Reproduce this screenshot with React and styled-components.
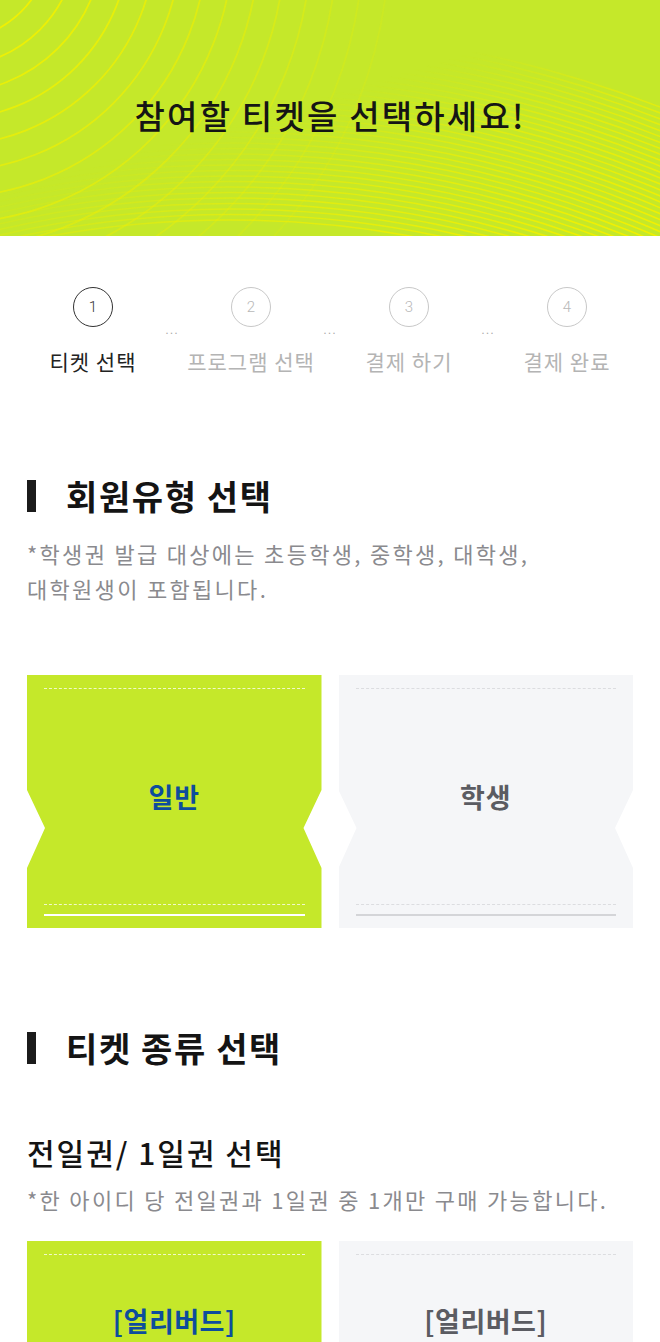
import React from "react";
import styled, { createGlobalStyle } from "styled-components";

const Global = createGlobalStyle`
  html, body { margin: 0; padding: 0; background: #fff; }
  body { font-family: "Noto Sans CJK KR", "Noto Sans", sans-serif; color: #111; }
  * { box-sizing: border-box; }
`;

const Page = styled.div`
  width: 660px;
  height: 1342px;
  overflow: hidden;
  background: #fff;
`;

const Hero = styled.header`
  position: relative;
  height: 236px;
  background: #c5e82a;
  display: flex;
  align-items: center;
  justify-content: center;
  overflow: hidden;
`;

const HeroArt = styled.svg`
  position: absolute;
  inset: 0;
  width: 100%;
  height: 100%;
`;

const HeroTitle = styled.h1`
  position: relative;
  margin: -6px 0 0;
  font-size: 33px;
  font-weight: 500;
  letter-spacing: 2.2px;
  color: #151515;
  line-height: 1;
`;

const Stepper = styled.ol`
  list-style: none;
  margin: 51px auto 0;
  padding: 0;
  width: 632px;
  display: grid;
  grid-template-columns: 158px 0 158px 0 158px 0 158px;
`;

const Step = styled.li`
  display: flex;
  flex-direction: column;
  align-items: center;
`;

const StepCircle = styled.span`
  width: 40px;
  height: 40px;
  border-radius: 50%;
  border: 1.5px solid ${(p) => (p.$active ? "#333" : "#c8c8c8")};
  color: ${(p) => (p.$active ? "#333" : "#b8b8b8")};
  font-family: Roboto, "Noto Sans", sans-serif;
  font-weight: 300;
  font-size: 15px;
  display: flex;
  align-items: center;
  justify-content: center;
`;

const StepLabel = styled.span`
  margin-top: 20px;
  font-size: 21px;
  line-height: 28px;
  letter-spacing: 1px;
  color: ${(p) => (p.$active ? "#222" : "#b4b4b4")};
`;

const Dots = styled.li`
  display: flex;
  justify-content: center;
  width: 0;
  overflow: visible;
  padding-top: 38px;
  font-family: "DejaVu Sans", sans-serif;
  font-size: 11px;
  line-height: 12px;
  letter-spacing: 1px;
  color: #aaa;
  white-space: nowrap;
`;

const Section = styled.section`
  padding: 0 27px;
  margin-top: ${(p) => p.$top}px;
`;

const SectionTitle = styled.h2`
  margin: 0;
  display: flex;
  align-items: center;
  gap: 30px;
  font-size: 34px;
  font-weight: 700;
  line-height: 36px;
  letter-spacing: 1.6px;
  color: #141414;
  &::before {
    content: "";
    width: 9px;
    height: 32px;
    background: #1b1b1b;
  }
`;

const Note = styled.p`
  margin: ${(p) => p.$top || 0}px 0 0;
  font-size: 22px;
  line-height: 35px;
  letter-spacing: 2.3px;
  color: #8a8a8e;
  white-space: nowrap;
`;

const SubTitle = styled.h3`
  margin: 0;
  font-size: 30px;
  font-weight: 500;
  line-height: 36px;
  letter-spacing: 2px;
  color: #141414;
`;

const CardRow = styled.div`
  display: grid;
  grid-template-columns: 1fr 1fr;
  gap: 17px;
  margin-top: ${(p) => p.$top}px;
`;

const Card = styled.button`
  height: 253px;
  border: 0;
  padding: 0 17px;
  background: ${(p) => (p.$selected ? "#c5e82a" : "#f5f6f8")};
  clip-path: polygon(
    0 0, 100% 0, 100% 115px, calc(100% - 18px) 153px, 100% 193px,
    100% 100%, 0 100%, 0 193px, 18px 153px, 0 115px
  );
  display: flex;
  flex-direction: column;
  font-family: inherit;
  cursor: pointer;
`;

const Dash = styled.div`
  height: 0;
  border-top: 1px dashed ${(p) => (p.$selected ? "rgba(255,255,255,0.75)" : "#dcdde0")};
  margin-top: ${(p) => p.$top || 0}px;
`;

const Rule = styled.div`
  height: 2px;
  margin: 9px 0 12px;
  background: ${(p) => (p.$selected ? "#ffffff" : "#d4d5d8")};
`;

const CardLabel = styled.span`
  flex: ${(p) => (p.$cut ? "none" : 1)};
  margin-top: ${(p) => (p.$cut ? 48 : 0)}px;
  display: flex;
  align-items: center;
  justify-content: center;
  font-size: 27px;
  line-height: 36px;
  font-weight: 700;
  letter-spacing: ${(p) => (p.$cut ? 0.5 : 1)}px;
  color: ${(p) => (p.$selected ? "#0d4d9c" : "#5b5c62")};
`;

const steps = ["티켓 선택", "프로그램 선택", "결제 하기", "결제 완료"];

function HeroBackground() {
  const tl = [];
  for (let i = 0; i < 15; i++) {
    const r = 75 + i * 26;
    tl.push(
      <circle key={"a" + i} cx={-50} cy={-60} r={r} fill="none" stroke="#f2f000" strokeWidth="1.8" opacity={Math.max(0.15, 1 - i * 0.06)} />
    );
  }
  const br = [];
  for (let i = 0; i < 36; i++) {
    const r = 1010 + i * 5.5;
    br.push(<circle key={"b" + i} cx={230} cy={1230} r={r} fill="none" stroke="#f2f000" strokeWidth="1.6" />);
  }
  return (
    <HeroArt viewBox="0 0 660 236" preserveAspectRatio="none" aria-hidden="true">
      <defs>
        <linearGradient id="fadeBR" x1="0.5" y1="0.4" x2="1" y2="1">
          <stop offset="0" stopColor="#fff" stopOpacity="0" />
          <stop offset="0.4" stopColor="#fff" stopOpacity="0.6" />
          <stop offset="1" stopColor="#fff" stopOpacity="1" />
        </linearGradient>
        <mask id="maskBR">
          <rect x="0" y="0" width="660" height="236" fill="url(#fadeBR)" />
        </mask>
      </defs>
      <g>{tl}</g>
      <g mask="url(#maskBR)">{br}</g>
    </HeroArt>
  );
}

function TicketCard({ selected, label, cut }) {
  return (
    <Card $selected={selected} type="button">
      <Dash $selected={selected} $top={13} />
      <CardLabel $selected={selected} $cut={cut}>{label}</CardLabel>
      {!cut && (
        <>
          <Dash $selected={selected} />
          <Rule $selected={selected} />
        </>
      )}
    </Card>
  );
}

export default function App() {
  return (
    <>
      <Global />
      <Page>
        <Hero>
          <HeroBackground />
          <HeroTitle>참여할 티켓을 선택하세요!</HeroTitle>
        </Hero>

        <Stepper>
          {steps.map((s, i) => (
            <React.Fragment key={s}>
              {i > 0 && <Dots>...</Dots>}
              <Step>
                <StepCircle $active={i === 0}>{i + 1}</StepCircle>
                <StepLabel $active={i === 0}>{s}</StepLabel>
              </Step>
            </React.Fragment>
          ))}
        </Stepper>

        <Section $top={103}>
          <SectionTitle>회원유형 선택</SectionTitle>
          <Note $top={22}>
            *학생권 발급 대상에는 초등학생, 중학생, 대학생,
            <br />
            대학원생이 포함됩니다.
          </Note>
          <CardRow $top={69}>
            <TicketCard selected label="일반" />
            <TicketCard label="학생" />
          </CardRow>
        </Section>

        <Section $top={102}>
          <SectionTitle>티켓 종류 선택</SectionTitle>
        </Section>

        <Section $top={68}>
          <SubTitle>전일권/ 1일권 선택</SubTitle>
          <Note $top={12}>*한 아이디 당 전일권과 1일권 중 1개만 구매 가능합니다.</Note>
          <CardRow $top={24}>
            <TicketCard selected label="[얼리버드]" cut />
            <TicketCard label="[얼리버드]" cut />
          </CardRow>
        </Section>
      </Page>
    </>
  );
}
